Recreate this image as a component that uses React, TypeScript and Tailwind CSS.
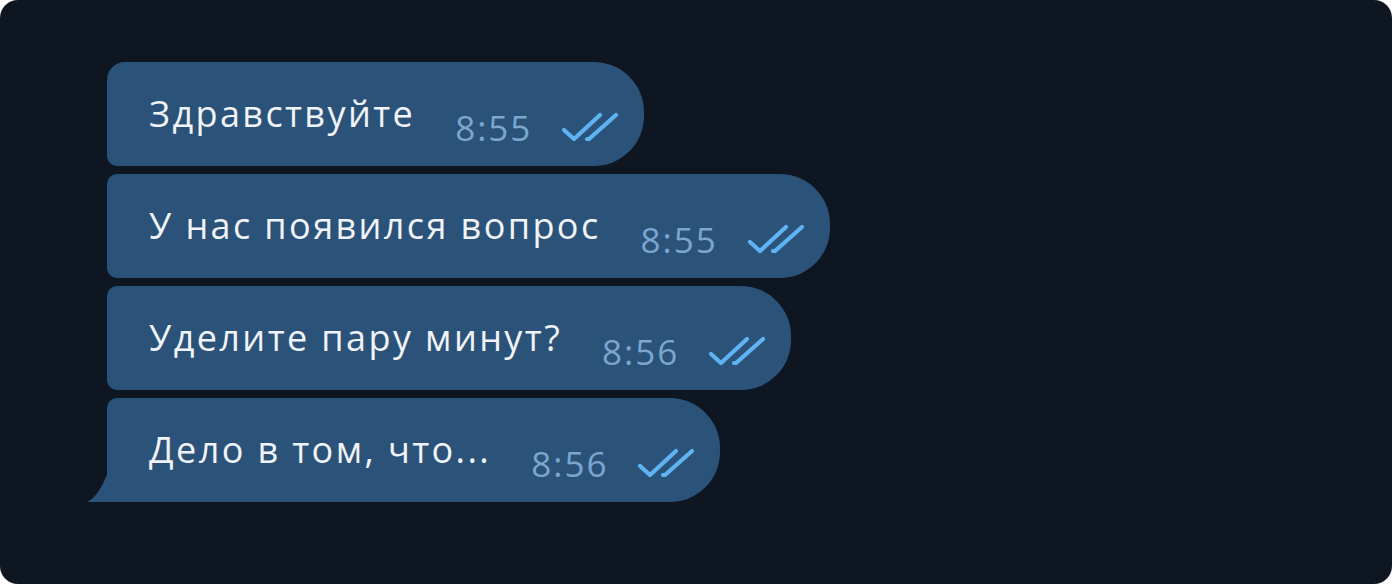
const MESSAGES = [
  { text: "Здравствуйте", time: "8:55" },
  { text: "У нас появился вопрос", time: "8:55" },
  { text: "Уделите пару минут?", time: "8:56" },
  { text: "Дело в том, что...", time: "8:56" },
];

function DoubleCheck() {
  return (
    <svg width="58" height="32" viewBox="0 0 58 32" fill="none" className="shrink-0">
      <path
        d="M3 19 L13 28 L39 4"
        stroke="#5fb3f2"
        strokeWidth="4.2"
        strokeLinecap="round"
        strokeLinejoin="round"
      />
      <path
        d="M26 28 L28 28 L55 4"
        stroke="#5fb3f2"
        strokeWidth="4.2"
        strokeLinecap="round"
        strokeLinejoin="round"
      />
    </svg>
  );
}

function Bubble({
  text,
  time,
  first,
  last,
}: {
  text: string;
  time: string;
  first: boolean;
  last: boolean;
}) {
  const corners = first
    ? "rounded-tl-[18px] rounded-bl-[10px]"
    : last
      ? "rounded-tl-[10px] rounded-bl-none"
      : "rounded-tl-[10px] rounded-bl-[10px]";
  return (
    <div
      className={`relative flex h-[104px] items-center rounded-r-[50px] bg-[#2b5278] pl-[42px] pr-[25px] ${corners}`}
    >
      <span className="text-[36px] leading-none tracking-[2.4px] text-[#f0f3f7] whitespace-nowrap">
        {text}
      </span>
      <span className="ml-[40px] mt-[26px] text-[35px] leading-none tracking-[2px] text-[#7aa6d0] whitespace-nowrap">
        {time}
      </span>
      <span className="ml-[29px] mt-[26px]">
        <DoubleCheck />
      </span>
      {last && (
        <svg
          width="22"
          height="30"
          viewBox="0 0 22 30"
          className="absolute bottom-0 left-[-20px]"
        >
          <path d="M21 0 L21 30 L0 30 C8 26 14 18 21 0 Z" fill="#2b5278" />
        </svg>
      )}
    </div>
  );
}

export default function App() {
  return (
    <div className="h-[584px] w-[1392px] bg-white" style={{ fontFamily: '"Open Sans", "Noto Sans", sans-serif' }}>
      <div className="flex h-full w-full flex-col items-start gap-[8px] rounded-[18px] bg-[#0e1621] pl-[107px] pt-[62px]">
        {MESSAGES.map((m, i) => (
          <Bubble
            key={i}
            text={m.text}
            time={m.time}
            first={i === 0}
            last={i === MESSAGES.length - 1}
          />
        ))}
      </div>
    </div>
  );
}
